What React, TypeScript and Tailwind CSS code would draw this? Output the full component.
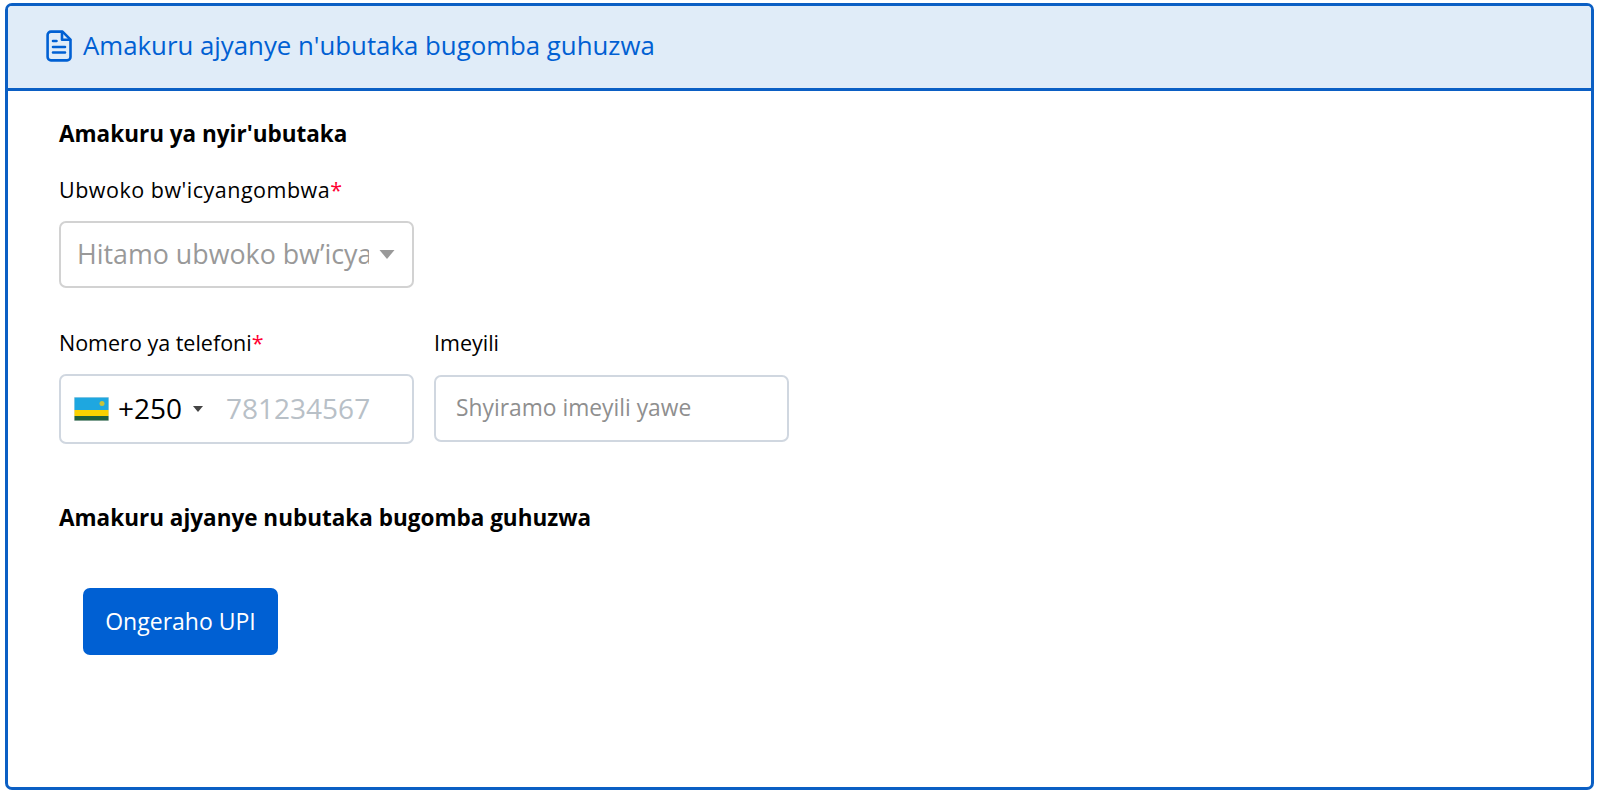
function Caret({ className }: { className: string }) {
  return (
    <svg viewBox="0 0 10 6" className={className} fill="currentColor">
      <path d="M0 0h10L5 6z" />
    </svg>
  );
}

function RwandaFlag() {
  return (
    <svg viewBox="0 0 35 24" className="h-[24px] w-[35px] shrink-0">
      <rect width="35" height="24" fill="#dfe3e6" />
      <rect x="0.5" y="0.5" width="34" height="12.500" fill="#1ea7e0" />
      <rect x="0.5" y="13" width="34" height="6" fill="#fad201" />
      <rect x="0.5" y="19" width="34" height="4.500" fill="#20603d" />
      <circle cx="28" cy="6.500" r="2.500" fill="#c9c33a" />
    </svg>
  );
}

function DocIcon() {
  return (
    <svg viewBox="0 0 26 32" className="h-[32px] w-[26px] shrink-0 text-[#0060d3]" fill="none" stroke="currentColor" strokeWidth="2.6" strokeLinejoin="round" strokeLinecap="round">
      <path d="M5 1.6h11.5l8 8V27a3.4 3.4 0 0 1-3.4 3.4H5A3.4 3.4 0 0 1 1.6 27V5A3.4 3.4 0 0 1 5 1.6z" />
      <path d="M16 2v7.8h8" />
      <path d="M7 11h3.5M7 17h12M7 22.500h12" />
    </svg>
  );
}

export default function App() {
  return (
    <div className="h-[796px] bg-white pt-[3px] pr-[6px] pb-[6px] pl-[5px] font-['Open_Sans','Noto_Sans',sans-serif] text-black">
      <div className="flex h-full flex-col overflow-hidden rounded-[7px] border-[3px] border-[#0b5fc4]">
        <div className="flex h-[85px] items-center gap-[11px] border-b-[3px] border-[#0b5fc4] bg-[#e0ecf8] pb-[3px] pl-[38px]">
          <DocIcon />
          <h1 className="text-[25.800px] text-[#0060d3]">Amakuru ajyanye n'ubutaka bugomba guhuzwa</h1>
        </div>
        <div className="flex-1 pt-[28px] pl-[51px]">
          <h2 className="text-[22.500px] leading-[30px] font-bold">Amakuru ya nyir'ubutaka</h2>
          <p className="mt-[27px] text-[21.500px] leading-[28px] tracking-[0.5px]">
            Ubwoko bw'icyangombwa<span className="text-[#ff0033]">*</span>
          </p>
          <div className="mt-[17px] flex h-[67px] w-[355px] items-center overflow-hidden rounded-[7px] border-2 border-[#d2d2d2] pr-[17px] pl-[16px]">
            <span className="w-[292px] overflow-hidden text-[26.800px] whitespace-nowrap text-[#999999]">Hitamo ubwoko bw’icyangombwa</span>
            <Caret className="ml-auto h-[9px] w-[16px] text-[#999999]" />
          </div>
          <div className="mt-[41px] flex gap-[20px]">
            <div className="w-[355px]">
              <p className="text-[21.500px] leading-[28px]">
                Nomero ya telefoni<span className="text-[#ff0033]">*</span>
              </p>
              <div className="mt-[17px] flex h-[70px] items-center rounded-[7px] border-2 border-[#d0d7e0] pl-[13px]">
                <RwandaFlag />
                <span className="mb-[2px] ml-[9px] text-[28px]">+250</span>
                <Caret className="ml-[11px] h-[6px] w-[10px] text-[#444444]" />
                <span className="mb-[2px] ml-[23px] text-[28px] text-[#b8c0c7]">781234567</span>
              </div>
            </div>
            <div className="w-[355px]">
              <p className="text-[21.500px] leading-[28px]">Imeyili</p>
              <div className="mt-[18px] flex h-[67px] items-center rounded-[7px] border-2 border-[#d0d7e0] pl-[20px]">
                <span className="text-[22.800px] text-[#8f8f8f]">Shyiramo imeyili yawe</span>
              </div>
            </div>
          </div>
          <h2 className="mt-[59px] text-[22.500px] leading-[30px] font-bold">Amakuru ajyanye nubutaka bugomba guhuzwa</h2>
          <button className="mt-[55px] ml-[24px] block h-[67px] w-[195px] rounded-[7px] bg-[#0060d3] text-[23px] font-medium text-white">Ongeraho UPI</button>
        </div>
      </div>
    </div>
  );
}
